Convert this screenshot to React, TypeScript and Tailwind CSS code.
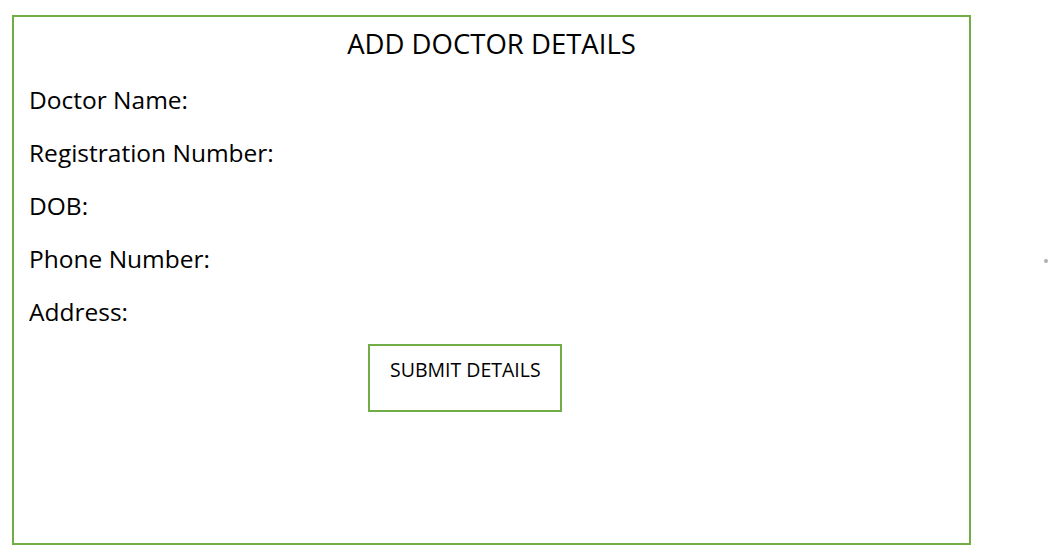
export default function App() {
  const fields = ['Doctor Name:', 'Registration Number:', 'DOB:', 'Phone Number:', 'Address:']
  return (
    <div className="relative w-[1050px] h-[559px] bg-white text-black" style={{ fontFamily: '"Open Sans", "Noto Sans", sans-serif' }}>
      <div className="absolute left-[12px] top-[15px] w-[959px] h-[530px] border-2 border-[#70ad47]">
        <h1 className="text-center text-[27.5px] leading-[34px] mt-[10px]">ADD DOCTOR DETAILS</h1>
        <div className="flex flex-col gap-[23px] mt-[24px] pl-[15px]">
          {fields.map(f => (
            <div key={f} className="text-[24.5px] leading-[30px]">{f}</div>
          ))}
        </div>
        <div className="ml-[354px] mt-[17px] w-[194px] h-[68px] border-2 border-[#70ad47] pt-[12px] pl-[20px] text-[19.5px] leading-[24px]">
          SUBMIT DETAILS
        </div>
      </div>
      {/* stray dot */}
      <div className="absolute left-[1044px] top-[259px] w-[4px] h-[4px] rounded-full bg-[#b0b0b0]" />
    </div>
  )
}
